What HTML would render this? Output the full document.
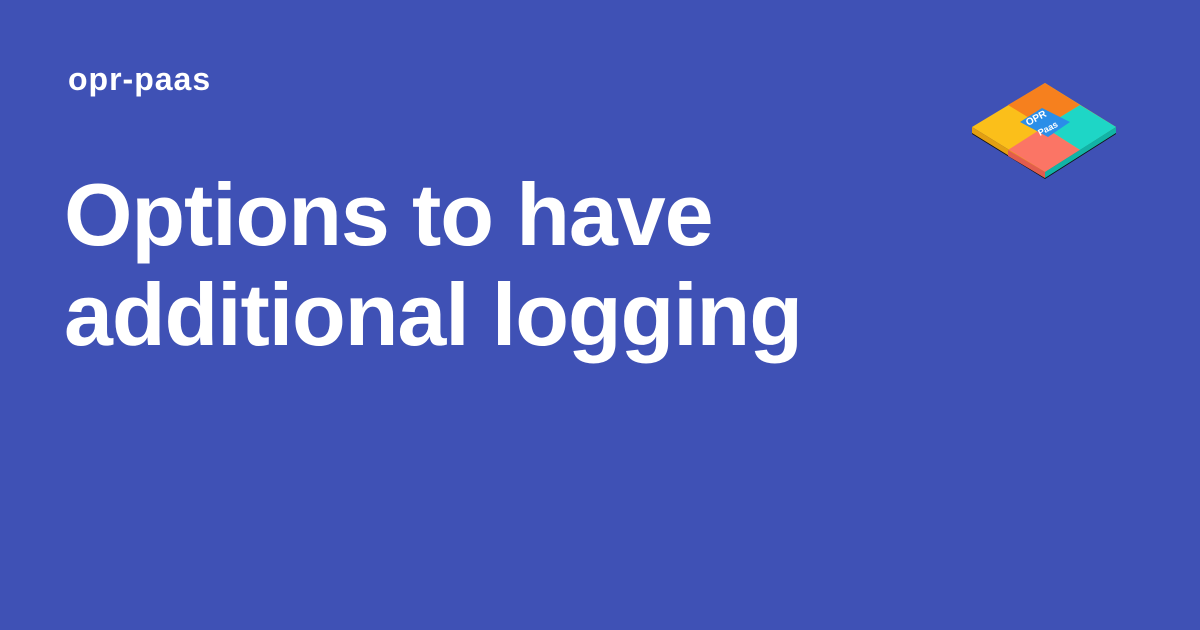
<!DOCTYPE html>
<html><head><style>
html,body{margin:0;padding:0;}
body{width:1200px;height:630px;background:#3f51b5;position:relative;overflow:hidden;font-family:"Liberation Sans",sans-serif;color:#fff;}
.site{position:absolute;left:68px;top:61px;font-size:32px;font-weight:bold;letter-spacing:1px;}
.title{position:absolute;left:64px;top:165px;font-size:88px;font-weight:bold;line-height:100px;letter-spacing:-1.1px;}
</style></head><body>
<div class="site">opr-paas</div>
<div class="title">Options to have<br>additional logging</div>
<svg style="position:absolute;left:960px;top:70px" width="170" height="120" viewBox="960 70 170 120">
<polygon points="972,127 1045,172 1116,127 1116,134 1045,179 972,134" fill="#111"/>
<polygon points="972,127 1045,83 1116,127 1045,172" fill="#fbbf1a"/>
<polygon points="1008,105 1045,83 1080,105 1044,127" fill="#f6801e"/>
<polygon points="1080,105 1116,127 1080,150 1044,127" fill="#1ed6c6"/>
<polygon points="1008,150 1044,127 1080,150 1045,172" fill="#fb7565"/>
<polygon points="972,127 1045,172 1045,178 972,133" fill="#e39f12"/>
<polygon points="1045,172 1116,127 1116,133 1045,178" fill="#12b3a6"/>
<polygon points="1008,150 1045,172 1045,178 1008,156" fill="#e25c4e"/>
<polygon points="1020,122 1042,108 1070,122 1048,137" fill="#2a8ee8"/>
<text x="1028" y="126" font-size="10" font-weight="bold" fill="#fff" transform="rotate(-28 1028 126)">OPR</text>
<text x="1040" y="136" font-size="9" font-weight="bold" fill="#fff" transform="rotate(-28 1040 136)">Paas</text>
</svg>
</body></html>
